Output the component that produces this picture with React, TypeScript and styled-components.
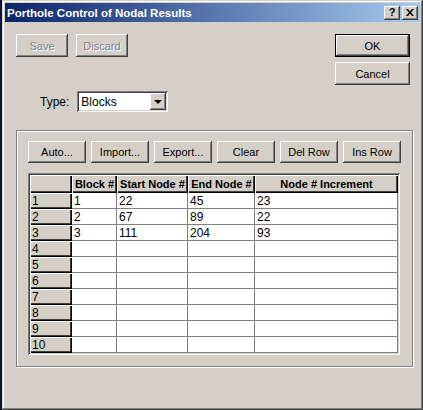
import styled, { createGlobalStyle } from 'styled-components';

const GlobalStyle = createGlobalStyle`
    html, body {
        margin: 0;
        padding: 0;
        background: #0b1636;
    }
    body {
        font-family: "Liberation Sans", Arial, sans-serif;
        font-size: 11px;
        color: #000;
    }
`;

const Window = styled.div`
    margin-left: 2px;
    width: 421px;
    height: 410px;
    box-sizing: border-box;
    padding: 3px;
    background: #d4d0c8;
    box-shadow: inset -1px -1px #404040, inset 1px 1px #d4d0c8, inset -2px -2px #808080, inset 2px 2px #fff;
    display: flex;
    flex-direction: column;
`;

const TitleBar = styled.div`
    height: 19px;
    display: flex;
    align-items: center;
    padding: 0 2px 0 2px;
    background: linear-gradient(to right, #0a246a, #a6caf0);
`;

const Title = styled.span`
    flex: 1;
    color: #fff;
    font-weight: bold;
    font-size: 11.5px;
`;

const TitleButton = styled.div`
    width: 16px;
    height: 14px;
    box-sizing: border-box;
    margin-left: 2px;
    background: #d4d0c8;
    box-shadow: inset -1px -1px #404040, inset 1px 1px #fff, inset -2px -2px #808080;
    display: flex;
    align-items: center;
    justify-content: center;
    font-weight: bold;
    font-size: 11px;
    line-height: 1;
`;

const Content = styled.div`
    flex: 1;
    padding: 12px 7px 0 11px;
    display: flex;
    flex-direction: column;
`;

const TopRow = styled.div`
    display: flex;
    justify-content: space-between;
    align-items: flex-start;
`;

const Group = styled.div<{ gap: number }>`
    display: flex;
    gap: ${(p) => p.gap}px;
`;

const Stack = styled.div`
    display: flex;
    flex-direction: column;
    gap: 5px;
    margin-right: 3px;
`;

const Button = styled.button<{ w: number; h?: number; isDefault?: boolean }>`
    width: ${(p) => p.w}px;
    height: ${(p) => p.h ?? 23}px;
    padding: 0;
    border: ${(p) => (p.isDefault ? '1px solid #000' : 'none')};
    background: #d4d0c8;
    font-family: "Liberation Sans", Arial, sans-serif;
    font-size: 11px;
    font-weight: normal;
    color: #000;
    box-shadow: inset -1px -1px #404040, inset 1px 1px #fff, inset -2px -2px #808080, inset 2px 2px #d4d0c8;

    &:disabled {
        color: #808080;
        text-shadow: 1px 1px #fff;
    }
`;

const TypeRow = styled.div`
    margin-top: 6px;
    padding-left: 24px;
    display: flex;
    align-items: center;
    gap: 8px;
    font-size: 12px;
`;

const Combo = styled.div`
    width: 91px;
    height: 21px;
    box-sizing: border-box;
    padding: 2px;
    background: #fff;
    box-shadow: inset 1px 1px #808080, inset -1px -1px #fff, inset 2px 2px #404040, inset -2px -2px #d4d0c8;
    display: flex;
    align-items: center;
`;

const ComboText = styled.span`
    flex: 1;
    padding-left: 2px;
    font-size: 12px;
`;

const ComboArrow = styled.div`
    width: 16px;
    height: 17px;
    background: #d4d0c8;
    box-shadow: inset -1px -1px #404040, inset 1px 1px #fff, inset -2px -2px #808080;
    display: flex;
    align-items: center;
    justify-content: center;

    &::after {
        content: '';
        border-left: 4px solid transparent;
        border-right: 4px solid transparent;
        border-top: 4px solid #000;
    }
`;

const Frame = styled.div`
    margin-top: 18px;
    width: 397px;
    height: 237px;
    box-sizing: border-box;
    padding: 10px 0 0 11px;
    border: 1px solid #808080;
    box-shadow: 1px 1px 0 #fff, inset 1px 1px 0 #fff;
`;

const Toolbar = styled.div`
    display: flex;
    gap: 5px;
`;

const GridBox = styled.div`
    margin-top: 10px;
    width: 372px;
    box-sizing: border-box;
    padding: 2px;
    background: #fff;
    box-shadow: inset 1px 1px #808080, inset -1px -1px #fff, inset 2px 2px #404040, inset -2px -2px #d4d0c8;
`;

const Table = styled.table`
    border-collapse: separate;
    border-spacing: 0;
    table-layout: fixed;
    width: 368px;
    font-size: 12px;
`;

const HeadCell = styled.th`
    height: 18px;
    box-sizing: border-box;
    padding: 0 1px;
    background: #d4d0c8;
    font-weight: bold;
    font-size: 11px;
    text-align: center;
    white-space: nowrap;
    overflow: hidden;
    box-shadow: inset 1px 1px #fff, inset -1px -1px #000, inset -2px -2px #404040;
`;

const RowHead = styled.td`
    height: 16px;
    box-sizing: border-box;
    padding: 0 2px;
    background: #d4d0c8;
    text-align: left;
    box-shadow: inset 1px 1px #fff, inset -1px -1px #000, inset -2px -2px #404040;
`;

const Cell = styled.td`
    height: 16px;
    box-sizing: border-box;
    padding: 0 2px;
    background: #fff;
    border-right: 1px solid #808080;
    border-bottom: 1px solid #808080;
`;

const rows = [
    ['1', '22', '45', '23'],
    ['2', '67', '89', '22'],
    ['3', '111', '204', '93'],
];

export default function App() {
    const data = Array.from({ length: 10 }, (_, i) => rows[i] ?? ['', '', '', '']);

    return (
        <>
            <GlobalStyle />
            <Window>
                <TitleBar>
                    <Title>Porthole Control of Nodal Results</Title>
                    <TitleButton>?</TitleButton>
                    <TitleButton>
                        <svg width="8" height="7" viewBox="0 0 8 7">
                            <path d="M0 0h2l2 2.5L6 0h2L5 3.5 8 7H6L4 4.5 2 7H0l3-3.5z" fill="#000" />
                        </svg>
                    </TitleButton>
                </TitleBar>
                <Content>
                    <TopRow>
                        <Group gap={8}>
                            <Button w={52} disabled>Save</Button>
                            <Button w={52} disabled>Discard</Button>
                        </Group>
                        <Stack>
                            <Button w={75} isDefault>OK</Button>
                            <Button w={75}>Cancel</Button>
                        </Stack>
                    </TopRow>
                    <TypeRow>
                        <span>Type:</span>
                        <Combo>
                            <ComboText>Blocks</ComboText>
                            <ComboArrow />
                        </Combo>
                    </TypeRow>
                    <Frame>
                        <Toolbar>
                            {['Auto...', 'Import...', 'Export...', 'Clear', 'Del Row', 'Ins Row'].map((label) => (
                                <Button key={label} w={58} h={22}>{label}</Button>
                            ))}
                        </Toolbar>
                        <GridBox>
                            <Table>
                                <colgroup>
                                    <col style={{ width: 42 }} />
                                    <col style={{ width: 45 }} />
                                    <col style={{ width: 71 }} />
                                    <col style={{ width: 67 }} />
                                    <col style={{ width: 143 }} />
                                </colgroup>
                                <thead>
                                    <tr>
                                        <HeadCell />
                                        <HeadCell>Block #</HeadCell>
                                        <HeadCell>Start Node #</HeadCell>
                                        <HeadCell>End Node #</HeadCell>
                                        <HeadCell>Node # Increment</HeadCell>
                                    </tr>
                                </thead>
                                <tbody>
                                    {data.map((row, i) => (
                                        <tr key={i}>
                                            <RowHead>{i + 1}</RowHead>
                                            {row.map((v, j) => (
                                                <Cell key={j}>{v}</Cell>
                                            ))}
                                        </tr>
                                    ))}
                                </tbody>
                            </Table>
                        </GridBox>
                    </Frame>
                </Content>
            </Window>
        </>
    );
}
